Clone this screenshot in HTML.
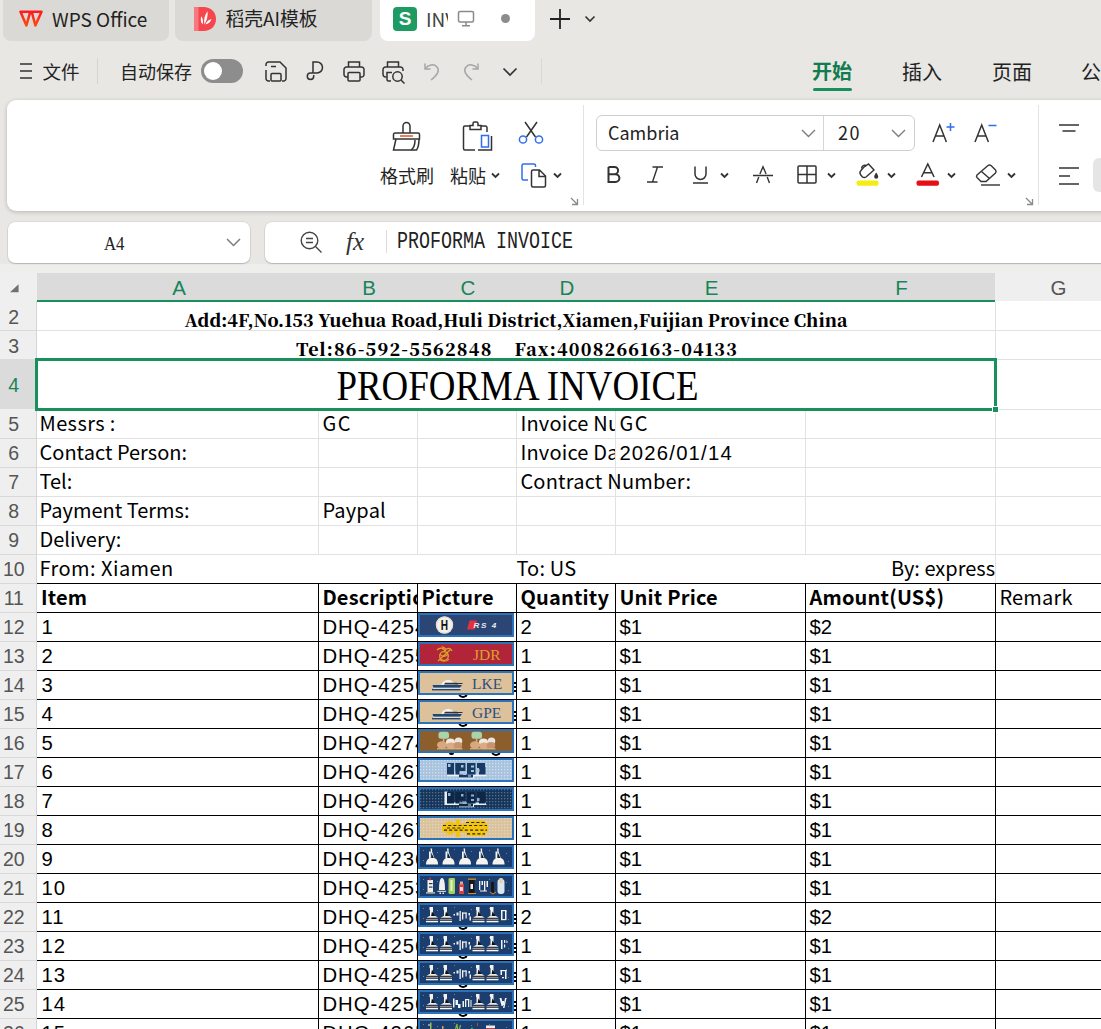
<!DOCTYPE html><html lang="zh"><head><meta charset="utf-8"><title>WPS Office - INVOICE</title><style>
*{box-sizing:border-box;margin:0;padding:0}
html,body{width:1101px;height:1029px;overflow:hidden;background:#e8e7e3}
body{position:relative;font-family:"Liberation Sans","Noto Sans CJK SC",sans-serif;color:#1f1f1f}
.abs,.abs *{position:absolute}
.ui{font-family:"Noto Sans CJK SC","Liberation Sans",sans-serif}
.t{position:absolute;white-space:pre;line-height:1}
.cell{position:absolute;white-space:pre;font-family:"Noto Sans CJK SC","Liberation Sans",sans-serif;font-size:20px;line-height:29px;height:29px;overflow:hidden;color:#000}
.b{font-weight:700}
.num{font-family:"Liberation Sans",sans-serif;font-size:20.300px;padding-top:1.500px}
.hl{position:absolute;height:1px;background:#e1e1e1}
.vl{position:absolute;width:1px;background:#e1e1e1}
.bk{background:#000}
.rh{position:absolute;left:0;width:27.500px;text-align:center;font-family:"Liberation Sans",sans-serif;font-size:19.500px;color:#555;line-height:29px}
.ch{position:absolute;top:273px;height:27px;text-align:center;font-family:"Liberation Sans",sans-serif;font-size:20.500px;line-height:29px;color:#17845a;background:#dbdbdb}
svg{position:absolute;overflow:visible}
.pic{position:absolute;left:418px;width:96px;height:24px;border:2px solid #2a72b9;overflow:hidden}
</style></head><body>
<div id="titlebar">
<div style="position:absolute;left:3px;top:-8px;width:166px;height:49px;background:#dad9d5;border-radius:8px"></div>
<div style="position:absolute;left:175px;top:-8px;width:197px;height:49px;background:#dad9d5;border-radius:8px"></div>
<div style="position:absolute;left:380px;top:-8px;width:155px;height:49px;background:#fff;border-radius:8px"></div>
<svg style="left:19px;top:9.500px" width="24" height="18" viewBox="0 0 24 18" fill="none" stroke-width="2.500" stroke-linejoin="round"><defs><linearGradient id="wg" x1="0" y1="0" x2="0" y2="1"><stop offset="0" stop-color="#ff1a1f"/><stop offset="1" stop-color="#ff4a0a"/></linearGradient></defs><path d="M1.500 1.700 H11.300 L7.400 15.500 Z M12.700 1.700 H22.500 L16.400 15.500 Z" stroke="url(#wg)"/></svg>
<div class="t ui" style="left:52px;top:9px;font-size:19px;color:#222">WPS Office</div>
<svg style="left:194px;top:7px" width="22" height="24" viewBox="0 0 22 24"><path d="M0 1 Q0 0 1 0 H9.500 C17 0 22 5 22 12 C22 19 17 24 9.500 24 H1.500 Q0 24 0 22.500 Z" fill="#f5464d"/><path d="M0 1 Q0 0 1 0 H4.500 V24 H1.500 Q0 24 0 22.500 Z" fill="#f8787d"/><path d="M8.500 17.500 C6.500 15 6.500 12 7.300 9.300 C9 12 9.500 15 8.500 17.500Z M10.300 17.300 C9.500 12 11 7.500 13.500 4.300 C14 9 13 14 10.300 17.300Z M11.300 17.500 C12.500 14.500 15 12.500 17.500 12 C16.500 15 14.500 17 11.300 17.500Z" fill="#fff"/></svg>
<div class="t ui" style="left:225.500px;top:9px;font-size:18.800px;color:#222">稻壳AI模板</div>
<div style="position:absolute;left:393px;top:7px;width:24px;height:24px;border-radius:4px;background:#1d9b62"></div>
<div class="t" style="left:393px;top:9px;width:24px;text-align:center;font-size:19px;font-weight:700;color:#fff">S</div>
<div class="t ui" style="left:426px;top:9px;font-size:19px;color:#444;width:22px;overflow:hidden">INV</div>
<svg style="left:457px;top:10px" width="20" height="18" viewBox="0 0 20 18" fill="none" stroke="#8a8a8a" stroke-width="1.5"><rect x="1.5" y="1.5" width="15" height="10.5" rx="1.5"/><path d="M9 12 V15.5 M5 15.8 H13"/></svg>
<div style="position:absolute;left:501px;top:14px;width:9px;height:9px;border-radius:50%;background:#8c8c8c"></div>
<svg style="left:549px;top:8px" width="22" height="22" viewBox="0 0 22 22" stroke="#222" stroke-width="1.8" fill="none"><path d="M11 1 V21 M1 11 H21"/></svg>
<svg style="left:584px;top:15px" width="12" height="8" viewBox="0 0 12 8" stroke="#333" stroke-width="1.6" fill="none"><path d="M1.5 1.5 L6 6 L10.5 1.5"/></svg>
</div>
<div id="menurow">
<svg style="left:19px;top:62px" width="15" height="18" viewBox="0 0 15 18" stroke="#333" stroke-width="1.6" fill="none"><path d="M1 2 H13 M1 9 H13 M1 16 H13"/></svg>
<div class="t ui" style="left:42.500px;top:61.500px;font-size:18.500px;color:#222">文件</div>
<div style="position:absolute;left:97px;top:58px;width:1px;height:26px;background:#d4d4d4"></div>
<div class="t ui" style="left:120px;top:62px;font-size:18px;color:#222">自动保存</div>
<div style="position:absolute;left:201px;top:59px;width:42px;height:24px;border-radius:12px;background:#8d8d8d"></div>
<div style="position:absolute;left:204px;top:62px;width:18px;height:18px;border-radius:50%;background:#fff"></div>
<svg style="left:265px;top:61px" width="22" height="21" viewBox="0 0 22 21" fill="none" stroke="#333" stroke-width="1.5"><path d="M1 5 V3.5 A2.5 2.5 0 0 1 3.5 1 H15 L21 7 V17.5 A2.5 2.5 0 0 1 18.500 20 H17 M1 9 V17.5 A2.5 2.5 0 0 0 3.5 20 H5"/><rect x="6" y="12.500" width="10" height="7.500" rx="1"/><path d="M6 5.500 H11"/></svg>
<svg style="left:305px;top:61px" width="20" height="21" viewBox="0 0 20 21" fill="none" stroke="#333" stroke-width="1.5"><path d="M8 12 V1 H12 A5.500 5.500 0 0 1 12 12 H5.500 A3.200 3.200 0 1 0 8.700 15.200 V14"/></svg>
<svg style="left:343px;top:61px" width="22" height="21" viewBox="0 0 22 21" fill="none" stroke="#333" stroke-width="1.5"><path d="M5.500 6 V1 H16.500 V6"/><path d="M5 16 H3.500 A2.500 2.500 0 0 1 1 13.500 V8.500 A2.500 2.500 0 0 1 3.500 6 H18.500 A2.500 2.500 0 0 1 21 8.500 V13.500 A2.500 2.500 0 0 1 18.500 16 H17"/><rect x="5" y="11.500" width="12" height="8.500" rx="1"/></svg>
<svg style="left:382px;top:61px" width="24" height="23" viewBox="0 0 24 23" fill="none" stroke="#333" stroke-width="1.5"><path d="M5.500 6 V1 H16.500 V6"/><path d="M4.500 16 H3.500 A2.500 2.500 0 0 1 1 13.500 V8.500 A2.500 2.500 0 0 1 3.500 6 H18.500 A2.500 2.500 0 0 1 21 8.500 V10"/><path d="M9 20 H6.500 A1.500 1.500 0 0 1 5 18.500 V11.500 H10"/><circle cx="15.500" cy="15.500" r="4.700"/><path d="M19 19 L22.500 22.500"/></svg>
<svg style="left:424px;top:62px" width="16" height="19" viewBox="0 0 16 19" fill="none" stroke="#a6a6a6" stroke-width="1.5"><path d="M1 1.500 V7 H6.500"/><path d="M1.500 6.500 C4 2.500 10 1.500 13 5 C16 8.500 13.500 13 7 18"/></svg>
<svg style="left:463px;top:62px" width="16" height="19" viewBox="0 0 16 19" fill="none" stroke="#a6a6a6" stroke-width="1.5"><path d="M15 1.500 V7 H9.500"/><path d="M14.500 6.500 C12 2.500 6 1.500 3 5 C0 8.500 2.500 13 9 18"/></svg>
<svg style="left:502px;top:67px" width="16" height="10" viewBox="0 0 16 10" stroke="#333" stroke-width="1.7" fill="none"><path d="M1.500 1.500 L8 8 L14.500 1.500"/></svg>
<div style="position:absolute;left:541px;top:58px;width:1px;height:26px;background:#d8d8d8"></div>
<div class="t ui b" style="left:812px;top:61px;font-size:20px;color:#107c4f">开始</div>
<div style="position:absolute;left:813px;top:88px;width:39px;height:3px;border-radius:1.5px;background:#17905c"></div>
<div class="t ui" style="left:902px;top:62px;font-size:20px;color:#222">插入</div>
<div class="t ui" style="left:992px;top:62px;font-size:20px;color:#222">页面</div>
<div class="t ui" style="left:1081px;top:62px;font-size:20px;color:#222">公</div>
</div>
<div id="ribbon">
<div style="position:absolute;left:7px;top:100px;width:1120px;height:111px;background:#fff;border-radius:9px;box-shadow:0 1px 4px rgba(0,0,0,.22)"></div>
<svg style="left:392px;top:121px" width="29" height="30" viewBox="0 0 29 30" fill="none" stroke="#333" stroke-width="1.5"><path d="M11 12 V5 A3.500 3.500 0 0 1 18 5 V12"/><path d="M3 12 H26 A1.500 1.500 0 0 1 27.500 13.500 V18 H1.500 V13.500 A1.500 1.500 0 0 1 3 12 Z"/><path d="M4 18 L1.500 29 H19 C22 27 23 23 23 19"/><path d="M27 18 C27 23 26 27 24.500 29 H19"/><path d="M8 15 H21" stroke="#e8502a"/></svg>
<div class="t ui" style="left:380px;top:165.500px;font-size:18px;color:#222">格式刷</div>
<svg style="left:462px;top:121px" width="31" height="30" viewBox="0 0 31 30" fill="none" stroke="#333" stroke-width="1.5"><path d="M8 5 H3 A1.500 1.500 0 0 0 1.500 6.500 V27.500 A1.500 1.500 0 0 0 3 29 H13"/><path d="M19 5 H23.500 A1.500 1.500 0 0 1 25 6.500 V11"/><path d="M8 8.500 V4.500 H11 V2.500 A1.500 1.500 0 0 1 12.500 1 H14.500 A1.500 1.500 0 0 1 16 2.500 V4.500 H19 V8.500 Z"/><path d="M16 29 H29.500 V15"/><rect x="19.500" y="14.500" width="7" height="11.500" stroke="#2f6df0"/></svg>
<div class="t ui" style="left:450px;top:165.500px;font-size:18px;color:#222">粘贴</div>
<svg style="left:491px;top:172px" width="9" height="7" viewBox="0 0 9 7" stroke="#333" stroke-width="1.8" fill="none"><path d="M1 1.500 L4.500 5 L8 1.500"/></svg>
<svg style="left:518px;top:121px" width="26" height="23" viewBox="0 0 26 23" fill="none" stroke-width="1.5"><path d="M7 1 L17.500 16 M19 1 L8.500 16" stroke="#333"/><circle cx="5" cy="18.500" r="3.600" stroke="#2f6df0"/><circle cx="21" cy="18.500" r="3.600" stroke="#2f6df0"/></svg>
<svg style="left:521px;top:163px" width="26" height="25" viewBox="0 0 26 25" fill="none" stroke-width="1.5"><path d="M7 17 H2.500 A1.500 1.500 0 0 1 1 15.500 V2.500 A1.500 1.500 0 0 1 2.500 1 H13 A1.500 1.500 0 0 1 14.500 2.500 V4" stroke="#2f6df0"/><path d="M10.500 8.500 A1.500 1.500 0 0 1 12 7 H18.500 L24.500 13 V22.500 A1.500 1.500 0 0 1 23 24 H12 A1.500 1.500 0 0 1 10.500 22.500 Z M18 7.500 V13.500 H24" stroke="#333"/></svg>
<svg style="left:553px;top:172px" width="9" height="7" viewBox="0 0 9 7" stroke="#333" stroke-width="1.8" fill="none"><path d="M1 1.500 L4.500 5 L8 1.500"/></svg>
<svg style="left:570px;top:197px" width="9" height="9" viewBox="0 0 9 9" stroke="#8a8a8a" stroke-width="1.300" fill="none"><path d="M1 1 L7.500 7.500 M7.500 2 V7.500 H2"/></svg>
<div style="position:absolute;left:583px;top:105px;width:1px;height:100px;background:#e3e3e3"></div>
<div style="position:absolute;left:596px;top:115px;width:319px;height:36px;border:1px solid #cfcfcf;border-radius:6px;background:#fff"></div>
<div style="position:absolute;left:823px;top:116px;width:1px;height:34px;background:#d6d6d6"></div>
<div class="t ui" style="left:608px;top:123px;font-size:18px;color:#222">Cambria</div>
<svg style="left:801px;top:129px" width="15" height="9" viewBox="0 0 15 9" stroke="#7d7d7d" stroke-width="1.400" fill="none"><path d="M1 1 L7.500 7.500 L14 1"/></svg>
<div class="t ui" style="left:838px;top:123px;font-size:18px;letter-spacing:1.500px;color:#222">20</div>
<svg style="left:891px;top:129px" width="15" height="9" viewBox="0 0 15 9" stroke="#7d7d7d" stroke-width="1.400" fill="none"><path d="M1 1 L7.500 7.500 L14 1"/></svg>
<svg style="left:932px;top:122px" width="24" height="21" viewBox="0 0 24 21" fill="none" stroke="#333" stroke-width="1.500"><path d="M1 20 L7.700 3 L14.400 20 M3.300 14 H12.100"/><path d="M18.500 1 V9 M14.500 5 H22.500" stroke="#2f6df0"/></svg>
<svg style="left:974px;top:122px" width="24" height="21" viewBox="0 0 24 21" fill="none" stroke="#333" stroke-width="1.500"><path d="M1 20 L7.700 3 L14.400 20 M3.300 14 H12.100"/><path d="M14.500 3.500 H22.500" stroke="#2f6df0"/></svg>
<svg style="left:607px;top:166px" width="14" height="17" viewBox="0 0 14 17" fill="none" stroke="#333" stroke-width="2"><path d="M1.500 1 H7.500 A3.600 3.600 0 0 1 7.500 8.200 H1.500 M1.500 8.200 H8.500 A3.900 3.900 0 0 1 8.500 16 H1.500 V1"/></svg>
<svg style="left:646px;top:166px" width="18" height="17" viewBox="0 0 18 17" fill="none" stroke="#333" stroke-width="1.400"><path d="M6.500 1 H17 M1 16 H11.500 M11.500 1 L6.500 16"/></svg>
<svg style="left:692px;top:166px" width="17" height="18" viewBox="0 0 17 18" fill="none" stroke="#333" stroke-width="1.500"><path d="M3 0.500 V8 A5.500 5.500 0 0 0 14 8 V0.500 M1 17 H16"/></svg>
<svg style="left:720px;top:172px" width="9" height="7" viewBox="0 0 9 7" stroke="#333" stroke-width="1.800" fill="none"><path d="M1 1.500 L4.500 5 L8 1.500"/></svg>
<svg style="left:752px;top:166px" width="22" height="18" viewBox="0 0 22 18" fill="none" stroke="#333" stroke-width="1.400"><path d="M4.500 17 L6.800 11 M15.200 11 L17.500 17 M7.900 8 L11 0.800 L14.100 8 M1 9.500 H21"/></svg>
<svg style="left:797px;top:165px" width="20" height="19" viewBox="0 0 20 19" fill="none" stroke="#333" stroke-width="1.500"><rect x="1" y="1" width="18" height="17" rx="1"/><path d="M10 1 V18 M1 9.500 H19"/></svg>
<svg style="left:827px;top:172px" width="9" height="7" viewBox="0 0 9 7" stroke="#333" stroke-width="1.800" fill="none"><path d="M1 1.500 L4.500 5 L8 1.500"/></svg>
<svg style="left:856px;top:163px" width="24" height="24" viewBox="0 0 24 24" fill="none" stroke="#333" stroke-width="1.400"><path d="M7.500 4.500 L12.500 1 L18 7 L10 14 C8.500 15 7 14.500 6 13.500 L4.500 11.500 C3.500 10 4 8.500 5 7.500 Z"/><path d="M5.500 5.500 C6 3 8 1.500 10.500 2.500"/><path d="M20.200 9.500 C21.500 11.500 22.200 12.800 22.200 13.800 A2 2 0 0 1 18.200 13.800 C18.200 12.800 18.900 11.500 20.200 9.500 Z" fill="#333" stroke="none"/><rect x="0.500" y="17.500" width="22" height="5.200" rx="2" fill="#f5ec13" stroke="none"/></svg>
<svg style="left:887px;top:172px" width="9" height="7" viewBox="0 0 9 7" stroke="#333" stroke-width="1.800" fill="none"><path d="M1 1.500 L4.500 5 L8 1.500"/></svg>
<svg style="left:916px;top:163px" width="24" height="24" viewBox="0 0 24 24" fill="none" stroke="#333" stroke-width="1.500"><path d="M5.500 14 L11.800 1 L18.100 14 M7.600 9.800 H16"/><rect x="0.500" y="17.500" width="22.500" height="5.200" rx="2" fill="#e60f16" stroke="none"/></svg>
<svg style="left:947px;top:172px" width="9" height="7" viewBox="0 0 9 7" stroke="#333" stroke-width="1.800" fill="none"><path d="M1 1.500 L4.500 5 L8 1.500"/></svg>
<svg style="left:975px;top:164px" width="26" height="22" viewBox="0 0 26 22" fill="none" stroke="#333" stroke-width="1.400"><path d="M2 11 L13 1.500 C14 0.800 15 0.800 16 1.500 L20.500 6 C21.300 7 21.300 8 20.500 9 L11 17.500 H6 L2 13.500 C1.300 12.700 1.300 11.800 2 11 Z"/><path d="M6.500 7.500 L14.500 14.500"/><path d="M6 21 H25"/></svg>
<svg style="left:1007px;top:172px" width="9" height="7" viewBox="0 0 9 7" stroke="#333" stroke-width="1.800" fill="none"><path d="M1 1.500 L4.500 5 L8 1.500"/></svg>
<svg style="left:1025px;top:197px" width="9" height="9" viewBox="0 0 9 9" stroke="#8a8a8a" stroke-width="1.300" fill="none"><path d="M1 1 L7.500 7.500 M7.500 2 V7.500 H2"/></svg>
<div style="position:absolute;left:1038px;top:105px;width:1px;height:100px;background:#e3e3e3"></div>
<svg style="left:1059px;top:124px" width="20" height="8" viewBox="0 0 20 8" stroke="#333" stroke-width="1.500" fill="none"><path d="M0 1 H20 M3.500 7 H16.500"/></svg>
<svg style="left:1059px;top:167px" width="20" height="18" viewBox="0 0 20 18" stroke="#333" stroke-width="1.500" fill="none"><path d="M0 1 H20 M0 9 H11 M0 17 H20"/></svg>
<div style="position:absolute;left:1093px;top:158px;width:30px;height:34px;border-radius:6px;background:#e5e5e5"></div>
</div>
<div id="fbar">
<div style="position:absolute;left:0;top:264px;width:1101px;height:10px;background:#eeeeec"></div>
<div style="position:absolute;left:7.500px;top:221.500px;width:242px;height:41px;background:#fff;border-radius:7px;box-shadow:0 0 0 .5px rgba(0,0,0,.10),0 1px 1.500px rgba(0,0,0,.18)"></div>
<div class="t" style="left:104px;top:233.500px;font-family:'Liberation Serif',serif;font-size:19.500px;color:#222;transform:scaleX(.86);transform-origin:0 0">A4</div>
<svg style="left:226px;top:238px" width="15" height="9" viewBox="0 0 15 9" stroke="#7d7d7d" stroke-width="1.500" fill="none"><path d="M1 1 L7.500 7.500 L14 1"/></svg>
<div style="position:absolute;left:264.500px;top:221.500px;width:860px;height:41px;background:#fff;border-radius:7px;box-shadow:0 0 0 .5px rgba(0,0,0,.10),0 1px 1.500px rgba(0,0,0,.18)"></div>
<svg style="left:300px;top:231px" width="23" height="23" viewBox="0 0 23 23" fill="none" stroke="#444" stroke-width="1.400"><circle cx="9.500" cy="9.500" r="8.300"/><path d="M15.500 15.500 L21.500 21.500 M6 7.500 H13 M6 11.500 H13"/></svg>
<div class="t" style="left:346px;top:229px;font-family:'Liberation Serif',serif;font-style:italic;font-size:25px;color:#333">fx</div>
<div style="position:absolute;left:386px;top:230px;width:1px;height:23px;background:#dcdcdc"></div>
<div class="t" style="left:397px;top:230px;font-family:'Liberation Mono',monospace;font-size:24px;color:#222;transform:scaleX(.764);transform-origin:0 0">PROFORMA INVOICE</div>
</div>
<div id="grid">
<div style="position:absolute;left:0;top:273px;width:1101px;height:756px;background:#fff"></div>
<div style="position:absolute;left:0;top:273px;width:36px;height:756px;background:#efefef"></div>
<div style="position:absolute;left:0;top:273px;width:1101px;height:28px;background:#efefef"></div>
<div style="position:absolute;left:37px;top:273px;width:958px;height:27px;background:#dbdbdb"></div>
<div class="ch" style="left:38.5px;width:281px;background:none">A</div>
<div class="ch" style="left:319.5px;width:99px;background:none">B</div>
<div class="ch" style="left:418.5px;width:99px;background:none">C</div>
<div class="ch" style="left:517.5px;width:99px;background:none">D</div>
<div class="ch" style="left:616.5px;width:190px;background:none">E</div>
<div class="ch" style="left:806.5px;width:190px;background:none">F</div>
<div class="ch" style="left:996.500px;width:124px;color:#555;background:none">G</div>
<div style="position:absolute;left:37px;top:300px;width:958px;height:2px;background:#17905c"></div>
<svg style="left:9.500px;top:284px" width="9" height="8.500" viewBox="0 0 10 9"><path d="M9.500 0 V9 H0 Z" fill="#707070"/></svg>
<div style="position:absolute;left:0;top:359px;width:36px;height:50px;background:#dbdbdb"></div>
<div class="rh" style="top:302px;height:28px;line-height:30px;color:#555">2</div>
<div class="hl" style="left:0;top:330px;width:36px;background:#d9d9d9"></div>
<div class="rh" style="top:331px;height:28px;line-height:30px;color:#555">3</div>
<div class="rh" style="top:359px;height:50px;line-height:52px;color:#17845a">4</div>
<div class="rh" style="top:409px;height:29px;line-height:31px;color:#555">5</div>
<div class="hl" style="left:0;top:438px;width:36px;background:#d9d9d9"></div>
<div class="rh" style="top:438px;height:29px;line-height:31px;color:#555">6</div>
<div class="hl" style="left:0;top:467px;width:36px;background:#d9d9d9"></div>
<div class="rh" style="top:467px;height:29px;line-height:31px;color:#555">7</div>
<div class="hl" style="left:0;top:496px;width:36px;background:#d9d9d9"></div>
<div class="rh" style="top:496px;height:29px;line-height:31px;color:#555">8</div>
<div class="hl" style="left:0;top:525px;width:36px;background:#d9d9d9"></div>
<div class="rh" style="top:525px;height:29px;line-height:31px;color:#555">9</div>
<div class="hl" style="left:0;top:554px;width:36px;background:#d9d9d9"></div>
<div class="rh" style="top:554px;height:29px;line-height:31px;color:#555">10</div>
<div class="hl" style="left:0;top:583px;width:36px;background:#d9d9d9"></div>
<div class="rh" style="top:583px;height:29px;line-height:31px;color:#555">11</div>
<div class="hl" style="left:0;top:612px;width:36px;background:#d9d9d9"></div>
<div class="rh" style="top:612px;height:29px;line-height:31px;color:#555">12</div>
<div class="hl" style="left:0;top:641px;width:36px;background:#d9d9d9"></div>
<div class="rh" style="top:641px;height:29px;line-height:31px;color:#555">13</div>
<div class="hl" style="left:0;top:670px;width:36px;background:#d9d9d9"></div>
<div class="rh" style="top:670px;height:29px;line-height:31px;color:#555">14</div>
<div class="hl" style="left:0;top:699px;width:36px;background:#d9d9d9"></div>
<div class="rh" style="top:699px;height:29px;line-height:31px;color:#555">15</div>
<div class="hl" style="left:0;top:728px;width:36px;background:#d9d9d9"></div>
<div class="rh" style="top:728px;height:29px;line-height:31px;color:#555">16</div>
<div class="hl" style="left:0;top:757px;width:36px;background:#d9d9d9"></div>
<div class="rh" style="top:757px;height:29px;line-height:31px;color:#555">17</div>
<div class="hl" style="left:0;top:786px;width:36px;background:#d9d9d9"></div>
<div class="rh" style="top:786px;height:29px;line-height:31px;color:#555">18</div>
<div class="hl" style="left:0;top:815px;width:36px;background:#d9d9d9"></div>
<div class="rh" style="top:815px;height:29px;line-height:31px;color:#555">19</div>
<div class="hl" style="left:0;top:844px;width:36px;background:#d9d9d9"></div>
<div class="rh" style="top:844px;height:29px;line-height:31px;color:#555">20</div>
<div class="hl" style="left:0;top:873px;width:36px;background:#d9d9d9"></div>
<div class="rh" style="top:873px;height:29px;line-height:31px;color:#555">21</div>
<div class="hl" style="left:0;top:902px;width:36px;background:#d9d9d9"></div>
<div class="rh" style="top:902px;height:29px;line-height:31px;color:#555">22</div>
<div class="hl" style="left:0;top:931px;width:36px;background:#d9d9d9"></div>
<div class="rh" style="top:931px;height:29px;line-height:31px;color:#555">23</div>
<div class="hl" style="left:0;top:960px;width:36px;background:#d9d9d9"></div>
<div class="rh" style="top:960px;height:29px;line-height:31px;color:#555">24</div>
<div class="hl" style="left:0;top:989px;width:36px;background:#d9d9d9"></div>
<div class="rh" style="top:989px;height:29px;line-height:31px;color:#555">25</div>
<div class="hl" style="left:0;top:1018px;width:36px;background:#d9d9d9"></div>
<div class="rh" style="top:1018px;height:29px;line-height:31px;color:#555">26</div>
<div class="hl" style="left:0;top:1047px;width:36px;background:#d9d9d9"></div>
<div class="vl" style="left:36px;top:301px;height:728px;background:#d4d4d4"></div>
<div class="hl" style="left:37px;top:330px;width:1064px"></div>
<div class="hl" style="left:37px;top:438px;width:1064px"></div>
<div class="hl" style="left:37px;top:467px;width:1064px"></div>
<div class="hl" style="left:37px;top:496px;width:1064px"></div>
<div class="hl" style="left:37px;top:525px;width:1064px"></div>
<div class="hl" style="left:37px;top:554px;width:1064px"></div>
<div class="hl" style="left:995px;top:359px;width:106px"></div><div class="hl" style="left:995px;top:409px;width:106px"></div>
<div class="vl" style="left:995px;top:302px;height:281px"></div>
<div class="vl" style="left:318px;top:410px;height:144px"></div>
<div class="vl" style="left:417px;top:410px;height:144px"></div>
<div class="vl" style="left:516px;top:410px;height:144px"></div>
<div class="vl" style="left:615px;top:410px;height:144px"></div>
<div class="vl" style="left:805px;top:410px;height:144px"></div>
<div class="hl bk" style="left:37px;top:583px;width:1064px"></div>
<div class="hl bk" style="left:37px;top:612px;width:1064px"></div>
<div class="hl bk" style="left:37px;top:641px;width:1064px"></div>
<div class="hl bk" style="left:37px;top:670px;width:1064px"></div>
<div class="hl bk" style="left:37px;top:699px;width:1064px"></div>
<div class="hl bk" style="left:37px;top:728px;width:1064px"></div>
<div class="hl bk" style="left:37px;top:757px;width:1064px"></div>
<div class="hl bk" style="left:37px;top:786px;width:1064px"></div>
<div class="hl bk" style="left:37px;top:815px;width:1064px"></div>
<div class="hl bk" style="left:37px;top:844px;width:1064px"></div>
<div class="hl bk" style="left:37px;top:873px;width:1064px"></div>
<div class="hl bk" style="left:37px;top:902px;width:1064px"></div>
<div class="hl bk" style="left:37px;top:931px;width:1064px"></div>
<div class="hl bk" style="left:37px;top:960px;width:1064px"></div>
<div class="hl bk" style="left:37px;top:989px;width:1064px"></div>
<div class="hl bk" style="left:37px;top:1018px;width:1064px"></div>
<div class="vl bk" style="left:318px;top:583px;height:446px"></div>
<div class="vl bk" style="left:417px;top:583px;height:446px"></div>
<div class="vl bk" style="left:516px;top:583px;height:446px"></div>
<div class="vl bk" style="left:615px;top:583px;height:446px"></div>
<div class="vl bk" style="left:805px;top:583px;height:446px"></div>
<div class="vl bk" style="left:995px;top:583px;height:446px"></div>
<div class="t" style="left:37px;top:310.500px;width:958px;text-align:center;font-family:'Noto Serif CJK SC','Liberation Serif',serif;font-weight:900;font-size:17.500px;color:#000;letter-spacing:0.060px">Add:4F,No.153 Yuehua Road,Huli District,Xiamen,Fuijian Province China</div>
<div class="t" style="left:38px;top:339.500px;width:958px;text-align:center;font-family:'Noto Serif CJK SC','Liberation Serif',serif;font-weight:900;font-size:17.500px;color:#000;letter-spacing:1.180px">Tel:86-592-5562848    Fax:4008266163-04133</div>
<div class="t" style="left:38px;top:365.800px;width:958px;text-align:center;font-family:'Liberation Serif',serif;font-size:41.500px;color:#000"><span style="display:inline-block;transform:scaleX(.89)">PROFORMA INVOICE</span></div>
<div style="position:absolute;left:35px;top:358px;width:962px;height:53px;border:3px solid #17905c"></div>
<div style="position:absolute;left:992px;top:406px;width:7px;height:7px;background:#17905c;border:1px solid #fff"></div>
<div class="cell " style="left:39.5px;top:408px;width:278.5px;letter-spacing:0.4px;">Messrs :</div>
<div class="cell " style="left:322.4px;top:408px;width:94.6px;letter-spacing:1.6px;">GC</div>
<div class="cell " style="left:520.4px;top:408px;width:94.6px;letter-spacing:0.2px;">Invoice Number:</div>
<div class="cell " style="left:619.4px;top:408px;width:185.6px;letter-spacing:1.6px;">GC</div>
<div class="cell " style="left:39.5px;top:437px;width:278.5px;">Contact Person:</div>
<div class="cell " style="left:520.4px;top:437px;width:94.6px;letter-spacing:0.2px;">Invoice Date:</div>
<div class="cell num" style="left:619.4px;top:437px;width:185.6px;letter-spacing:1.2px;">2026/01/14</div>
<div class="cell " style="left:39.5px;top:466px;width:278.5px;">Tel:</div>
<div class="cell " style="left:520.4px;top:466px;width:285px;letter-spacing:0.2px;">Contract Number:</div>
<div class="cell " style="left:39.5px;top:495px;width:278.5px;">Payment Terms:</div>
<div class="cell " style="left:322.4px;top:495px;width:94.6px;letter-spacing:0.2px;">Paypal</div>
<div class="cell " style="left:39.5px;top:524px;width:278.5px;">Delivery:</div>
<div class="cell " style="left:39.5px;top:553px;width:278.5px;letter-spacing:0.45px;">From: Xiamen</div>
<div class="cell " style="left:520.4px;top:553px;width:94.6px;margin-left:-4px;letter-spacing:0.2px;">To: US</div>
<div class="cell " style="left:805px;top:553px;width:190px;text-align:right;">By: express</div>
<div class="cell b" style="left:41.4px;top:582px;width:276.6px;margin-left:-.5px;letter-spacing:0.2px;">Item</div>
<div class="cell b" style="left:322.4px;top:582px;width:94.6px;letter-spacing:0.2px;">Description</div>
<div class="cell b" style="left:421.4px;top:582px;width:94.6px;letter-spacing:0.2px;">Picture</div>
<div class="cell b" style="left:520.4px;top:582px;width:94.6px;letter-spacing:0.2px;">Quantity</div>
<div class="cell b" style="left:619.4px;top:582px;width:185.6px;letter-spacing:0.2px;">Unit Price</div>
<div class="cell b" style="left:809.4px;top:582px;width:185.6px;letter-spacing:0.2px;">Amount(US$)</div>
<div class="cell " style="left:999.4px;top:582px;width:101.6px;letter-spacing:0.2px;">Remark</div>
<div class="cell num" style="left:41.4px;top:611px;width:276.6px;letter-spacing:1.0px;">1</div>
<div class="cell num" style="left:322.4px;top:611px;width:94.6px;letter-spacing:1.0px;">DHQ-4254</div>
<div class="cell num" style="left:520.4px;top:611px;width:94.6px;letter-spacing:0.2px;">2</div>
<div class="cell num" style="left:619.4px;top:611px;width:185.6px;">$1</div>
<div class="cell num" style="left:809.4px;top:611px;width:185.6px;">$2</div>
<div class="cell num" style="left:41.4px;top:640px;width:276.6px;letter-spacing:1.0px;">2</div>
<div class="cell num" style="left:322.4px;top:640px;width:94.6px;letter-spacing:1.0px;">DHQ-4255</div>
<div class="cell num" style="left:520.4px;top:640px;width:94.6px;letter-spacing:0.2px;">1</div>
<div class="cell num" style="left:619.4px;top:640px;width:185.6px;">$1</div>
<div class="cell num" style="left:809.4px;top:640px;width:185.6px;">$1</div>
<div class="cell num" style="left:41.4px;top:669px;width:276.6px;letter-spacing:1.0px;">3</div>
<div class="cell num" style="left:322.4px;top:669px;width:94.6px;letter-spacing:1.0px;">DHQ-4256</div>
<div class="cell num" style="left:520.4px;top:669px;width:94.6px;letter-spacing:0.2px;">1</div>
<div class="cell num" style="left:619.4px;top:669px;width:185.6px;">$1</div>
<div class="cell num" style="left:809.4px;top:669px;width:185.6px;">$1</div>
<div class="cell num" style="left:41.4px;top:698px;width:276.6px;letter-spacing:1.0px;">4</div>
<div class="cell num" style="left:322.4px;top:698px;width:94.6px;letter-spacing:1.0px;">DHQ-4256</div>
<div class="cell num" style="left:520.4px;top:698px;width:94.6px;letter-spacing:0.2px;">1</div>
<div class="cell num" style="left:619.4px;top:698px;width:185.6px;">$1</div>
<div class="cell num" style="left:809.4px;top:698px;width:185.6px;">$1</div>
<div class="cell num" style="left:41.4px;top:727px;width:276.6px;letter-spacing:1.0px;">5</div>
<div class="cell num" style="left:322.4px;top:727px;width:94.6px;letter-spacing:1.0px;">DHQ-4274</div>
<div class="cell num" style="left:520.4px;top:727px;width:94.6px;letter-spacing:0.2px;">1</div>
<div class="cell num" style="left:619.4px;top:727px;width:185.6px;">$1</div>
<div class="cell num" style="left:809.4px;top:727px;width:185.6px;">$1</div>
<div class="cell num" style="left:41.4px;top:756px;width:276.6px;letter-spacing:1.0px;">6</div>
<div class="cell num" style="left:322.4px;top:756px;width:94.6px;letter-spacing:1.0px;">DHQ-4267</div>
<div class="cell num" style="left:520.4px;top:756px;width:94.6px;letter-spacing:0.2px;">1</div>
<div class="cell num" style="left:619.4px;top:756px;width:185.6px;">$1</div>
<div class="cell num" style="left:809.4px;top:756px;width:185.6px;">$1</div>
<div class="cell num" style="left:41.4px;top:785px;width:276.6px;letter-spacing:1.0px;">7</div>
<div class="cell num" style="left:322.4px;top:785px;width:94.6px;letter-spacing:1.0px;">DHQ-4267</div>
<div class="cell num" style="left:520.4px;top:785px;width:94.6px;letter-spacing:0.2px;">1</div>
<div class="cell num" style="left:619.4px;top:785px;width:185.6px;">$1</div>
<div class="cell num" style="left:809.4px;top:785px;width:185.6px;">$1</div>
<div class="cell num" style="left:41.4px;top:814px;width:276.6px;letter-spacing:1.0px;">8</div>
<div class="cell num" style="left:322.4px;top:814px;width:94.6px;letter-spacing:1.0px;">DHQ-4267</div>
<div class="cell num" style="left:520.4px;top:814px;width:94.6px;letter-spacing:0.2px;">1</div>
<div class="cell num" style="left:619.4px;top:814px;width:185.6px;">$1</div>
<div class="cell num" style="left:809.4px;top:814px;width:185.6px;">$1</div>
<div class="cell num" style="left:41.4px;top:843px;width:276.6px;letter-spacing:1.0px;">9</div>
<div class="cell num" style="left:322.4px;top:843px;width:94.6px;letter-spacing:1.0px;">DHQ-4236</div>
<div class="cell num" style="left:520.4px;top:843px;width:94.6px;letter-spacing:0.2px;">1</div>
<div class="cell num" style="left:619.4px;top:843px;width:185.6px;">$1</div>
<div class="cell num" style="left:809.4px;top:843px;width:185.6px;">$1</div>
<div class="cell num" style="left:41.4px;top:872px;width:276.6px;letter-spacing:1.0px;">10</div>
<div class="cell num" style="left:322.4px;top:872px;width:94.6px;letter-spacing:1.0px;">DHQ-4253</div>
<div class="cell num" style="left:520.4px;top:872px;width:94.6px;letter-spacing:0.2px;">1</div>
<div class="cell num" style="left:619.4px;top:872px;width:185.6px;">$1</div>
<div class="cell num" style="left:809.4px;top:872px;width:185.6px;">$1</div>
<div class="cell num" style="left:41.4px;top:901px;width:276.6px;letter-spacing:1.0px;">11</div>
<div class="cell num" style="left:322.4px;top:901px;width:94.6px;letter-spacing:1.0px;">DHQ-4256</div>
<div class="cell num" style="left:520.4px;top:901px;width:94.6px;letter-spacing:0.2px;">2</div>
<div class="cell num" style="left:619.4px;top:901px;width:185.6px;">$1</div>
<div class="cell num" style="left:809.4px;top:901px;width:185.6px;">$2</div>
<div class="cell num" style="left:41.4px;top:930px;width:276.6px;letter-spacing:1.0px;">12</div>
<div class="cell num" style="left:322.4px;top:930px;width:94.6px;letter-spacing:1.0px;">DHQ-4256</div>
<div class="cell num" style="left:520.4px;top:930px;width:94.6px;letter-spacing:0.2px;">1</div>
<div class="cell num" style="left:619.4px;top:930px;width:185.6px;">$1</div>
<div class="cell num" style="left:809.4px;top:930px;width:185.6px;">$1</div>
<div class="cell num" style="left:41.4px;top:959px;width:276.6px;letter-spacing:1.0px;">13</div>
<div class="cell num" style="left:322.4px;top:959px;width:94.6px;letter-spacing:1.0px;">DHQ-4256</div>
<div class="cell num" style="left:520.4px;top:959px;width:94.6px;letter-spacing:0.2px;">1</div>
<div class="cell num" style="left:619.4px;top:959px;width:185.6px;">$1</div>
<div class="cell num" style="left:809.4px;top:959px;width:185.6px;">$1</div>
<div class="cell num" style="left:41.4px;top:988px;width:276.6px;letter-spacing:1.0px;">14</div>
<div class="cell num" style="left:322.4px;top:988px;width:94.6px;letter-spacing:1.0px;">DHQ-4256</div>
<div class="cell num" style="left:520.4px;top:988px;width:94.6px;letter-spacing:0.2px;">1</div>
<div class="cell num" style="left:619.4px;top:988px;width:185.6px;">$1</div>
<div class="cell num" style="left:809.4px;top:988px;width:185.6px;">$1</div>
<div class="cell num" style="left:41.4px;top:1017px;width:276.6px;letter-spacing:1.0px;">15</div>
<div class="cell num" style="left:322.4px;top:1017px;width:94.6px;letter-spacing:1.0px;">DHQ-4265</div>
<div class="cell num" style="left:520.4px;top:1017px;width:94.6px;letter-spacing:0.2px;">1</div>
<div class="cell num" style="left:619.4px;top:1017px;width:185.6px;">$1</div>
<div class="cell num" style="left:809.4px;top:1017px;width:185.6px;">$1</div>
<div style="position:absolute;left:458px;top:692px;width:9.500px;height:6px;border:2px solid #000;border-top:none;border-radius:0 0 5px 5px"></div>
<div style="position:absolute;left:514px;top:682px;width:2.500px;height:1.600px;background:#000"></div>
<div style="position:absolute;left:514px;top:686px;width:2.500px;height:1.600px;background:#000"></div>
<div style="position:absolute;left:514px;top:690px;width:2.500px;height:1.600px;background:#000"></div>
<div style="position:absolute;left:458px;top:721px;width:9.500px;height:6px;border:2px solid #000;border-top:none;border-radius:0 0 5px 5px"></div>
<div style="position:absolute;left:514px;top:711px;width:2.500px;height:1.600px;background:#000"></div>
<div style="position:absolute;left:514px;top:715px;width:2.500px;height:1.600px;background:#000"></div>
<div style="position:absolute;left:514px;top:719px;width:2.500px;height:1.600px;background:#000"></div>
<div style="position:absolute;left:458px;top:924px;width:9.500px;height:6px;border:2px solid #000;border-top:none;border-radius:0 0 5px 5px"></div>
<div style="position:absolute;left:514px;top:914px;width:2.500px;height:1.600px;background:#000"></div>
<div style="position:absolute;left:514px;top:918px;width:2.500px;height:1.600px;background:#000"></div>
<div style="position:absolute;left:514px;top:922px;width:2.500px;height:1.600px;background:#000"></div>
<div style="position:absolute;left:458px;top:953px;width:9.500px;height:6px;border:2px solid #000;border-top:none;border-radius:0 0 5px 5px"></div>
<div style="position:absolute;left:514px;top:943px;width:2.500px;height:1.600px;background:#000"></div>
<div style="position:absolute;left:514px;top:947px;width:2.500px;height:1.600px;background:#000"></div>
<div style="position:absolute;left:514px;top:951px;width:2.500px;height:1.600px;background:#000"></div>
<div style="position:absolute;left:458px;top:982px;width:9.500px;height:6px;border:2px solid #000;border-top:none;border-radius:0 0 5px 5px"></div>
<div style="position:absolute;left:514px;top:972px;width:2.500px;height:1.600px;background:#000"></div>
<div style="position:absolute;left:514px;top:976px;width:2.500px;height:1.600px;background:#000"></div>
<div style="position:absolute;left:514px;top:980px;width:2.500px;height:1.600px;background:#000"></div>
<div style="position:absolute;left:458px;top:1011px;width:9.500px;height:6px;border:2px solid #000;border-top:none;border-radius:0 0 5px 5px"></div>
<div style="position:absolute;left:514px;top:1001px;width:2.500px;height:1.600px;background:#000"></div>
<div style="position:absolute;left:514px;top:1005px;width:2.500px;height:1.600px;background:#000"></div>
<div style="position:absolute;left:514px;top:1009px;width:2.500px;height:1.600px;background:#000"></div>
<div style="position:absolute;left:448.500px;top:753px;width:5px;height:2px;background:#000;border-radius:0 0 3px 3px"></div>
<div style="position:absolute;left:491px;top:750px;width:9.500px;height:6px;border:2px solid #000;border-top:none;border-radius:0 0 5px 5px"></div>
<div class="pic" style="top:613px;background:#2b4675"><svg style="left:0;top:0" width="92" height="20" viewBox="0 0 92 20"><circle cx="24.500" cy="10" r="8.700" fill="#f3f1ea"/><circle cx="24.500" cy="10" r="8" fill="none" stroke="#d9d5c8" stroke-width=".8"/><text x="24.500" y="15" text-anchor="middle" font-family="Liberation Sans, sans-serif" font-weight="700" font-size="14" fill="#111" transform="translate(24.500 0) scale(.72 1) translate(-24.500 0)">H</text><path d="M49.500 5.500 H57 L54.500 14.500 H47 Z" fill="#e3313f"/><text x="53.500" y="13.300" font-family="Liberation Sans, sans-serif" font-weight="700" font-style="italic" font-size="8" letter-spacing="1.600" fill="#ececf2">RS 4</text></svg></div>
<div class="pic" style="top:642px;background:#b1243a"><svg style="left:0;top:0" width="92" height="20" viewBox="0 0 92 20"><g fill="none" stroke="#d8a42a" stroke-width="1.300"><circle cx="24" cy="12" r="4.300"/><path d="M17 6 C20 3 24 4 25 7 C27 3 31 4 32 7"/><path d="M18 17 L31 5 M20 10 C22 13 26 13 28 10 M19.500 14.500 C21 18 27 18 29 15"/><path d="M22 2.500 L26 5"/></g><text x="53" y="15.500" font-family="Liberation Serif, serif" font-size="15.500" fill="#d8a42a">JDR</text></svg></div>
<div class="pic" style="top:671px;background:#dcc19b"><svg style="left:0;top:0" width="92" height="20" viewBox="0 0 92 20"><path d="M12.500 12 H42 L40 14.800 H13.500 Z" fill="#1f4877"/><path d="M12 16.600 H40.500" stroke="#1f4877" stroke-width="1.600"/><path d="M13 15.300 H41" stroke="#f4f1ea" stroke-width=".9"/><path d="M21 11.800 C23 7.500 28 5.500 32 8 L35 11.800 Z" fill="#f4f3ef"/><path d="M25 9.800 H37 L38.500 11.600 H24 Z" fill="#2d3440"/><path d="M36 10.500 H42.500" stroke="#27313f" stroke-width="1"/><text x="52" y="15.500" font-family="Liberation Serif, serif" font-size="15.500" fill="#2a4f80">LKE</text></svg></div>
<div class="pic" style="top:700px;background:#dcc19b"><svg style="left:0;top:0" width="92" height="20" viewBox="0 0 92 20"><path d="M12.500 12 H42 L40 14.800 H13.500 Z" fill="#1f4877"/><path d="M12 16.600 H40.500" stroke="#1f4877" stroke-width="1.600"/><path d="M13 15.300 H41" stroke="#f4f1ea" stroke-width=".9"/><path d="M21 11.800 C23 7.500 28 5.500 32 8 L35 11.800 Z" fill="#f4f3ef"/><path d="M25 9.800 H37 L38.500 11.600 H24 Z" fill="#2d3440"/><path d="M36 10.500 H42.500" stroke="#27313f" stroke-width="1"/><text x="52" y="15.500" font-family="Liberation Serif, serif" font-size="15.500" fill="#2a4f80">GPE</text></svg></div>
<div class="pic" style="top:729px;background:#8c5e2b"><svg style="left:0;top:0" width="92" height="20" viewBox="0 0 92 20"><rect x="18.5" y=".8" width="10.500" height="7" rx="2.500" fill="#a8d3ab"/><rect x="22.8" y="7" width="1.600" height="4" fill="#c9b38f"/><ellipse cx="22" cy="14" rx="5" ry="3.800" fill="#d7a77e"/><ellipse cx="30.5" cy="11" rx="4.500" ry="3.600" fill="#efe9e1"/><ellipse cx="31" cy="14.800" rx="5" ry="3.200" fill="#dba982"/><ellipse cx="38.5" cy="10" rx="3.800" ry="3.600" fill="#e9e4dc"/><ellipse cx="38" cy="14.500" rx="4.200" ry="3.400" fill="#c8946d"/><rect x="17" y="17.200" width="25.500" height="1.200" fill="#cdbb9a"/><rect x="51.5" y=".8" width="10.500" height="7" rx="2.500" fill="#a8d3ab"/><rect x="55.8" y="7" width="1.600" height="4" fill="#c9b38f"/><ellipse cx="55" cy="14" rx="5" ry="3.800" fill="#d7a77e"/><ellipse cx="63.5" cy="11" rx="4.500" ry="3.600" fill="#efe9e1"/><ellipse cx="64" cy="14.800" rx="5" ry="3.200" fill="#dba982"/><ellipse cx="71.5" cy="10" rx="3.800" ry="3.600" fill="#e9e4dc"/><ellipse cx="71" cy="14.500" rx="4.200" ry="3.400" fill="#c8946d"/><rect x="50" y="17.200" width="25.500" height="1.200" fill="#cdbb9a"/></svg></div>
<div class="pic" style="top:758px;background:#a9c3df"><svg style="left:0;top:0" width="92" height="20" viewBox="0 0 92 20"><defs><pattern id="da" width="3" height="3" patternUnits="userSpaceOnUse"><rect x="0" y="0" width="1.300" height="1.300" fill="#fff" fill-opacity="0.45"/></pattern></defs><rect width="92" height="20" fill="url(#da)"/><path d="M27 14.500 H66 V16.200 H54 V18.500 H39 V16.200 H27 Z" fill="#eef3f9"/><g fill="#163a63"><rect x="27" y="3" width="7" height="11.500"/><rect x="35.500" y="3" width="10" height="8"/><rect x="35.500" y="3" width="4" height="11.500"/><rect x="47" y="3" width="8.500" height="11.500"/><rect x="57" y="3" width="8" height="5"/><rect x="59" y="7" width="6.500" height="7.500"/><rect x="39" y="14.500" width="14" height="3"/></g><g fill="#a9c3df"><rect x="28" y="4" width="2.500" height="3"/><rect x="41" y="5" width="2.500" height="2.500"/><rect x="51" y="5.500" width="3" height="2"/><rect x="51" y="10" width="3" height="2"/><rect x="57" y="9" width="2.500" height="3"/><rect x="43" y="12.500" width="3" height="2.500"/><rect x="48" y="15.300" width="3" height="1.300"/></g></svg></div>
<div class="pic" style="top:787px;background:#16355b"><svg style="left:0;top:0" width="92" height="20" viewBox="0 0 92 20"><defs><pattern id="db" width="3" height="3" patternUnits="userSpaceOnUse"><rect x="0" y="0" width="1.300" height="1.300" fill="#fff" fill-opacity="0.28"/></pattern></defs><rect width="92" height="20" fill="url(#db)"/><path d="M24.500 2.500 H27.500 V13.500 H66 V16 H54 V18.300 H39 V16 H24.500 Z" fill="#e6edf5"/><g fill="#0e2747"><rect x="27" y="3" width="7" height="11.500"/><rect x="35.500" y="3" width="10" height="8"/><rect x="35.500" y="3" width="4" height="11.500"/><rect x="47" y="3" width="8.500" height="11.500"/><rect x="57" y="3" width="8" height="5"/><rect x="59" y="7" width="6.500" height="7.500"/><rect x="39" y="14.500" width="14" height="3"/></g><g fill="#8fb0d2"><rect x="28" y="4" width="2.500" height="3"/><rect x="41" y="5" width="2.500" height="2.500"/><rect x="51" y="5.500" width="3" height="2"/><rect x="51" y="10" width="3" height="2"/><rect x="57" y="9" width="2.500" height="3"/><rect x="43" y="12.500" width="3" height="2.500"/><rect x="48" y="15.300" width="3" height="1.300"/></g></svg></div>
<div class="pic" style="top:816px;background:#d9c29c"><svg style="left:0;top:0" width="92" height="20" viewBox="0 0 92 20"><defs><pattern id="dc" width="3" height="3" patternUnits="userSpaceOnUse"><rect x="0" y="0" width="1.300" height="1.300" fill="#fff" fill-opacity="0.35"/></pattern></defs><rect width="92" height="20" fill="url(#dc)"/><g fill="#f2c40e"><rect x="22" y="5.500" width="46" height="9" rx="3.500"/><rect x="36" y="1.500" width="4" height="17.500"/><rect x="45" y="2.500" width="22" height="15.500" rx="5"/><rect x="26" y="3.500" width="8" height="13" rx="3"/></g><g stroke="#2b2618" stroke-width="1.200" stroke-dasharray="3 2.200"><path d="M23 7.500 H67 M24 12.200 H67 M46 4.500 H66 M47 15.800 H65 M27 10 H44"/></g></svg></div>
<div class="pic" style="top:845px;background:#1b3e6e"><svg style="left:0;top:0" width="92" height="20" viewBox="0 0 92 20"><g fill="#fff" fill-opacity=".35"><rect x="3" y="3" width="1" height="1"/><rect x="17" y="5" width="1" height="1"/><rect x="34" y="2" width="1" height="1"/><rect x="51" y="4" width="1" height="1"/><rect x="69" y="3" width="1" height="1"/><rect x="86" y="6" width="1" height="1"/><rect x="88" y="14" width="1" height="1"/><rect x="3" y="13" width="1" height="1"/></g><path d="M10.5 1.500 h1.600 v3 l2.200 6.500 h-2.500 Z M9.0 4.500 h1.800 v7 h-1.800z" fill="#f4f4f4"/><path d="M11.3 5.500 l2.600 5.500 h-2.600z" fill="#15202e"/><path d="M6.0 17.500 c0 -4 2 -6.500 5 -6.500 h2 c3.500 0 5 2.500 5 6.500 z" fill="#f5f3ef"/><path d="M27 1.500 h1.600 v3 l2.200 6.500 h-2.500 Z M25.5 4.500 h1.800 v7 h-1.800z" fill="#f4f4f4"/><path d="M27.8 5.500 l2.600 5.500 h-2.600z" fill="#15202e"/><path d="M22.5 17.500 c0 -4 2 -6.500 5 -6.500 h2 c3.500 0 5 2.500 5 6.500 z" fill="#f5f3ef"/><path d="M43.5 1.500 h1.600 v3 l2.200 6.500 h-2.500 Z M42.0 4.500 h1.800 v7 h-1.800z" fill="#f4f4f4"/><path d="M44.3 5.500 l2.600 5.500 h-2.600z" fill="#15202e"/><path d="M39.0 17.500 c0 -4 2 -6.500 5 -6.500 h2 c3.500 0 5 2.500 5 6.500 z" fill="#f5f3ef"/><path d="M60.5 1.500 h1.600 v3 l2.200 6.500 h-2.500 Z M59.0 4.500 h1.800 v7 h-1.800z" fill="#f4f4f4"/><path d="M61.3 5.500 l2.600 5.500 h-2.600z" fill="#15202e"/><path d="M56.0 17.500 c0 -4 2 -6.500 5 -6.500 h2 c3.500 0 5 2.500 5 6.500 z" fill="#f5f3ef"/><path d="M77 1.500 h1.600 v3 l2.200 6.500 h-2.500 Z M75.5 4.500 h1.800 v7 h-1.800z" fill="#f4f4f4"/><path d="M77.8 5.500 l2.600 5.500 h-2.600z" fill="#15202e"/><path d="M72.5 17.500 c0 -4 2 -6.500 5 -6.500 h2 c3.500 0 5 2.500 5 6.500 z" fill="#f5f3ef"/></svg></div>
<div class="pic" style="top:874px;background:#1b3e6e"><svg style="left:0;top:0" width="92" height="20" viewBox="0 0 92 20"><g fill="#fff" fill-opacity=".35"><rect x="3" y="3" width="1" height="1"/><rect x="17" y="5" width="1" height="1"/><rect x="34" y="2" width="1" height="1"/><rect x="51" y="4" width="1" height="1"/><rect x="69" y="3" width="1" height="1"/><rect x="86" y="6" width="1" height="1"/><rect x="88" y="14" width="1" height="1"/><rect x="3" y="13" width="1" height="1"/></g><rect x="7.500" y="4" width="5.500" height="12" fill="#f1f1f1"/><rect x="9.500" y="1.500" width="1.200" height="3" fill="#e23b3b"/><rect x="9" y="7" width="3.500" height="1.200" fill="#333"/><rect x="9" y="10.500" width="3.500" height="1.200" fill="#333"/><rect x="6" y="16.300" width="9" height="1.200" fill="#e9d9b0"/><path d="M19 14 c0 -8 1 -12 3 -12 s3 4 3 12 z" fill="#f1f1ef"/><rect x="17.500" y="14.800" width="8.500" height="1" fill="#eee"/><rect x="19.500" y="16.500" width="1.500" height="1.500" fill="#eee"/><rect x="22.500" y="16.500" width="1.500" height="1.500" fill="#eee"/><rect x="28.500" y="2" width="6.500" height="16" rx="1.500" fill="#a5d163"/><rect x="30.500" y="4" width="2" height="11" fill="#e4f2c6"/><rect x="39" y="8" width="5" height="10" fill="#d8403f"/><rect x="40" y="5.500" width="3" height="3" fill="#e9a1a1"/><rect x="40" y="11" width="3" height="4" fill="#f0d7d7"/><rect x="49" y="4" width="5.500" height="13" fill="#1a1712"/><rect x="48" y="2.500" width="8" height="1.300" fill="#c9962b"/><rect x="50.500" y="8" width="2.500" height="5" fill="#eee"/><rect x="48" y="17" width="8" height="1" fill="#c9962b"/><g fill="#f3f3f3"><rect x="59" y="5" width="1.300" height="9"/><rect x="61.500" y="5" width="1.500" height="4"/><rect x="64" y="5" width="1.300" height="10"/><rect x="66.500" y="5" width="1.500" height="6"/><rect x="60" y="14.500" width="7" height="1"/></g><rect x="71" y="6" width="3" height="11" fill="#1a1712"/><path d="M70 16 l3 2 l3 -2" stroke="#c9962b" fill="none"/><rect x="77.500" y="3" width="7" height="15" rx="3" fill="#dbe6ee"/><rect x="79.500" y="2" width="3" height="5" fill="#e7cfa8"/></svg></div>
<div class="pic" style="top:903px;background:#1b3e6e"><svg style="left:0;top:0" width="92" height="20" viewBox="0 0 92 20"><g fill="#fff" fill-opacity=".35"><rect x="3" y="3" width="1" height="1"/><rect x="17" y="5" width="1" height="1"/><rect x="34" y="2" width="1" height="1"/><rect x="51" y="4" width="1" height="1"/><rect x="69" y="3" width="1" height="1"/><rect x="86" y="6" width="1" height="1"/><rect x="88" y="14" width="1" height="1"/><rect x="3" y="13" width="1" height="1"/></g><path d="M9.5 2 h3.500 v3 h-3.500z M10.0 5 h3 v6.500 h-3z" fill="#f2f2f2"/><path d="M12.0 6.500 l3.200 5 h-4.200 z" fill="#0d0f14"/><path d="M6.5 12.800 l3 -1.800 h6 l2.500 1.800z" fill="#f3ead9"/><rect x="6.0" y="14.300" width="12" height=".9" fill="#e0a872"/><rect x="6.0" y="16" width="12" height="1.300" fill="#f7f7f7"/><path d="M23.5 2 h3.500 v3 h-3.500z M24.0 5 h3 v6.500 h-3z" fill="#f2f2f2"/><path d="M26.0 6.500 l3.200 5 h-4.200 z" fill="#0d0f14"/><path d="M20.5 12.800 l3 -1.800 h6 l2.500 1.800z" fill="#f3ead9"/><rect x="20.0" y="14.300" width="12" height=".9" fill="#e0a872"/><rect x="20.0" y="16" width="12" height="1.300" fill="#f7f7f7"/><path d="M56 2 h3.500 v3 h-3.500z M56.5 5 h3 v6.500 h-3z" fill="#f2f2f2"/><path d="M58.5 6.500 l3.200 5 h-4.200 z" fill="#0d0f14"/><path d="M53 12.800 l3 -1.800 h6 l2.500 1.800z" fill="#f3ead9"/><rect x="52.5" y="14.300" width="12" height=".9" fill="#e0a872"/><rect x="52.5" y="16" width="12" height="1.300" fill="#f7f7f7"/><path d="M70 2 h3.500 v3 h-3.500z M70.5 5 h3 v6.500 h-3z" fill="#f2f2f2"/><path d="M72.5 6.500 l3.200 5 h-4.200 z" fill="#0d0f14"/><path d="M67 12.800 l3 -1.800 h6 l2.500 1.800z" fill="#f3ead9"/><rect x="66.5" y="14.300" width="12" height=".9" fill="#e0a872"/><rect x="66.5" y="16" width="12" height="1.300" fill="#f7f7f7"/><g fill="#f3f3f3"><rect x="33.500" y="9" width="1.500" height="1.500"/><rect x="36.500" y="7.500" width="2" height="3"/><rect x="39.500" y="6" width="1.300" height="10"/><rect x="42" y="7.500" width="1.300" height="7"/><rect x="42" y="7.500" width="4.500" height="1.200"/><rect x="45.500" y="7.500" width="1.200" height="6"/><rect x="48.500" y="8" width="1.500" height="2.500"/><rect x="49.500" y="11.500" width="1.500" height="4"/></g><g fill="#f3f3f3"><rect x="81" y="5" width="1.500" height="10"/><rect x="85" y="5" width="1.500" height="10"/><rect x="81" y="5" width="5" height="1.200"/><rect x="81" y="14" width="5" height="1.200"/></g></svg></div>
<div class="pic" style="top:932px;background:#1b3e6e"><svg style="left:0;top:0" width="92" height="20" viewBox="0 0 92 20"><g fill="#fff" fill-opacity=".35"><rect x="3" y="3" width="1" height="1"/><rect x="17" y="5" width="1" height="1"/><rect x="34" y="2" width="1" height="1"/><rect x="51" y="4" width="1" height="1"/><rect x="69" y="3" width="1" height="1"/><rect x="86" y="6" width="1" height="1"/><rect x="88" y="14" width="1" height="1"/><rect x="3" y="13" width="1" height="1"/></g><path d="M9.5 2 h3.500 v3 h-3.500z M10.0 5 h3 v6.500 h-3z" fill="#f2f2f2"/><path d="M12.0 6.500 l3.200 5 h-4.200 z" fill="#0d0f14"/><path d="M6.5 12.800 l3 -1.800 h6 l2.500 1.800z" fill="#f3ead9"/><rect x="6.0" y="14.300" width="12" height=".9" fill="#e0a872"/><rect x="6.0" y="16" width="12" height="1.300" fill="#f7f7f7"/><path d="M23.5 2 h3.500 v3 h-3.500z M24.0 5 h3 v6.500 h-3z" fill="#f2f2f2"/><path d="M26.0 6.500 l3.200 5 h-4.200 z" fill="#0d0f14"/><path d="M20.5 12.800 l3 -1.800 h6 l2.500 1.800z" fill="#f3ead9"/><rect x="20.0" y="14.300" width="12" height=".9" fill="#e0a872"/><rect x="20.0" y="16" width="12" height="1.300" fill="#f7f7f7"/><path d="M56 2 h3.500 v3 h-3.500z M56.5 5 h3 v6.500 h-3z" fill="#f2f2f2"/><path d="M58.5 6.500 l3.200 5 h-4.200 z" fill="#0d0f14"/><path d="M53 12.800 l3 -1.800 h6 l2.500 1.800z" fill="#f3ead9"/><rect x="52.5" y="14.300" width="12" height=".9" fill="#e0a872"/><rect x="52.5" y="16" width="12" height="1.300" fill="#f7f7f7"/><path d="M70 2 h3.500 v3 h-3.500z M70.5 5 h3 v6.500 h-3z" fill="#f2f2f2"/><path d="M72.5 6.500 l3.200 5 h-4.200 z" fill="#0d0f14"/><path d="M67 12.800 l3 -1.800 h6 l2.500 1.800z" fill="#f3ead9"/><rect x="66.5" y="14.300" width="12" height=".9" fill="#e0a872"/><rect x="66.5" y="16" width="12" height="1.300" fill="#f7f7f7"/><g fill="#f3f3f3"><rect x="33.500" y="9" width="1.500" height="1.500"/><rect x="36.500" y="7.500" width="2" height="3"/><rect x="39.500" y="6" width="1.300" height="10"/><rect x="42" y="7.500" width="1.300" height="7"/><rect x="42" y="7.500" width="4.500" height="1.200"/><rect x="45.500" y="7.500" width="1.200" height="6"/><rect x="48.500" y="8" width="1.500" height="2.500"/><rect x="49.500" y="11.500" width="1.500" height="4"/></g><g fill="#f3f3f3"><rect x="81" y="6" width="1.500" height="9"/><rect x="84" y="6" width="1.200" height="3"/><rect x="84" y="10.500" width="1.200" height="3"/><rect x="86.500" y="7" width="1" height="2"/></g></svg></div>
<div class="pic" style="top:961px;background:#1b3e6e"><svg style="left:0;top:0" width="92" height="20" viewBox="0 0 92 20"><g fill="#fff" fill-opacity=".35"><rect x="3" y="3" width="1" height="1"/><rect x="17" y="5" width="1" height="1"/><rect x="34" y="2" width="1" height="1"/><rect x="51" y="4" width="1" height="1"/><rect x="69" y="3" width="1" height="1"/><rect x="86" y="6" width="1" height="1"/><rect x="88" y="14" width="1" height="1"/><rect x="3" y="13" width="1" height="1"/></g><path d="M9.5 2 h3.500 v3 h-3.500z M10.0 5 h3 v6.500 h-3z" fill="#f2f2f2"/><path d="M12.0 6.500 l3.200 5 h-4.200 z" fill="#0d0f14"/><path d="M6.5 12.800 l3 -1.800 h6 l2.500 1.800z" fill="#f3ead9"/><rect x="6.0" y="14.300" width="12" height=".9" fill="#e0a872"/><rect x="6.0" y="16" width="12" height="1.300" fill="#f7f7f7"/><path d="M23.5 2 h3.500 v3 h-3.500z M24.0 5 h3 v6.500 h-3z" fill="#f2f2f2"/><path d="M26.0 6.500 l3.200 5 h-4.200 z" fill="#0d0f14"/><path d="M20.5 12.800 l3 -1.800 h6 l2.500 1.800z" fill="#f3ead9"/><rect x="20.0" y="14.300" width="12" height=".9" fill="#e0a872"/><rect x="20.0" y="16" width="12" height="1.300" fill="#f7f7f7"/><path d="M56 2 h3.500 v3 h-3.500z M56.5 5 h3 v6.500 h-3z" fill="#f2f2f2"/><path d="M58.5 6.500 l3.200 5 h-4.200 z" fill="#0d0f14"/><path d="M53 12.800 l3 -1.800 h6 l2.500 1.800z" fill="#f3ead9"/><rect x="52.5" y="14.300" width="12" height=".9" fill="#e0a872"/><rect x="52.5" y="16" width="12" height="1.300" fill="#f7f7f7"/><path d="M70 2 h3.500 v3 h-3.500z M70.5 5 h3 v6.500 h-3z" fill="#f2f2f2"/><path d="M72.5 6.500 l3.200 5 h-4.200 z" fill="#0d0f14"/><path d="M67 12.800 l3 -1.800 h6 l2.500 1.800z" fill="#f3ead9"/><rect x="66.5" y="14.300" width="12" height=".9" fill="#e0a872"/><rect x="66.5" y="16" width="12" height="1.300" fill="#f7f7f7"/><g fill="#f3f3f3"><rect x="33.500" y="9" width="1.500" height="1.500"/><rect x="36.500" y="7.500" width="2" height="3"/><rect x="39.500" y="6" width="1.300" height="10"/><rect x="42" y="7.500" width="1.300" height="7"/><rect x="42" y="7.500" width="4.500" height="1.200"/><rect x="45.500" y="7.500" width="1.200" height="6"/><rect x="48.500" y="8" width="1.500" height="2.500"/><rect x="49.500" y="11.500" width="1.500" height="4"/></g><g fill="#f3f3f3"><rect x="80.500" y="7" width="1.500" height="5"/><rect x="80.500" y="7" width="6" height="1.200"/><rect x="85" y="7" width="1.500" height="9"/><rect x="82" y="14" width="2" height="1.200"/></g></svg></div>
<div class="pic" style="top:990px;background:#1b3e6e"><svg style="left:0;top:0" width="92" height="20" viewBox="0 0 92 20"><g fill="#fff" fill-opacity=".35"><rect x="3" y="3" width="1" height="1"/><rect x="17" y="5" width="1" height="1"/><rect x="34" y="2" width="1" height="1"/><rect x="51" y="4" width="1" height="1"/><rect x="69" y="3" width="1" height="1"/><rect x="86" y="6" width="1" height="1"/><rect x="88" y="14" width="1" height="1"/><rect x="3" y="13" width="1" height="1"/></g><path d="M9.5 2 h3.500 v3 h-3.500z M10.0 5 h3 v6.500 h-3z" fill="#f2f2f2"/><path d="M12.0 6.500 l3.200 5 h-4.200 z" fill="#0d0f14"/><path d="M6.5 12.800 l3 -1.800 h6 l2.500 1.800z" fill="#f3ead9"/><rect x="6.0" y="14.300" width="12" height=".9" fill="#e0a872"/><rect x="6.0" y="16" width="12" height="1.300" fill="#f7f7f7"/><path d="M23.5 2 h3.500 v3 h-3.500z M24.0 5 h3 v6.500 h-3z" fill="#f2f2f2"/><path d="M26.0 6.500 l3.200 5 h-4.200 z" fill="#0d0f14"/><path d="M20.5 12.800 l3 -1.800 h6 l2.500 1.800z" fill="#f3ead9"/><rect x="20.0" y="14.300" width="12" height=".9" fill="#e0a872"/><rect x="20.0" y="16" width="12" height="1.300" fill="#f7f7f7"/><path d="M56 2 h3.500 v3 h-3.500z M56.5 5 h3 v6.500 h-3z" fill="#f2f2f2"/><path d="M58.5 6.500 l3.200 5 h-4.200 z" fill="#0d0f14"/><path d="M53 12.800 l3 -1.800 h6 l2.500 1.800z" fill="#f3ead9"/><rect x="52.5" y="14.300" width="12" height=".9" fill="#e0a872"/><rect x="52.5" y="16" width="12" height="1.300" fill="#f7f7f7"/><path d="M70 2 h3.500 v3 h-3.500z M70.5 5 h3 v6.500 h-3z" fill="#f2f2f2"/><path d="M72.5 6.500 l3.200 5 h-4.200 z" fill="#0d0f14"/><path d="M67 12.800 l3 -1.800 h6 l2.500 1.800z" fill="#f3ead9"/><rect x="66.5" y="14.300" width="12" height=".9" fill="#e0a872"/><rect x="66.5" y="16" width="12" height="1.300" fill="#f7f7f7"/><g fill="#f3f3f3"><rect x="33" y="6.500" width="1.500" height="9"/><rect x="35.500" y="8" width="2.500" height="5"/><rect x="38" y="12" width="2.500" height="4"/><rect x="42.500" y="9" width="1.500" height="6"/><rect x="45" y="7" width="1.300" height="8"/><rect x="45" y="7" width="4" height="1.200"/><rect x="48" y="7" width="1.300" height="8"/><rect x="50.500" y="8" width="1" height="7"/></g><g fill="#f3f3f3"><path d="M79.500 6 l2 8 h1.500 l-1.500 -8z M86.500 6 l-2 10 h-1.500 l2 -10z"/><rect x="82" y="9" width="2" height="4"/></g></svg></div>
<div class="pic" style="top:1019px;background:#1b3e6e"><svg style="left:0;top:0" width="92" height="20" viewBox="0 0 92 20"><g fill="#fff" fill-opacity=".35"><rect x="3" y="3" width="1" height="1"/><rect x="17" y="5" width="1" height="1"/><rect x="34" y="2" width="1" height="1"/><rect x="51" y="4" width="1" height="1"/><rect x="69" y="3" width="1" height="1"/><rect x="86" y="6" width="1" height="1"/><rect x="88" y="14" width="1" height="1"/><rect x="3" y="13" width="1" height="1"/></g><rect x="10" y="1.500" width="1.500" height="9" fill="#8fc15a"/><rect x="8.500" y="3" width="1" height="2" fill="#f2f2f2"/><rect x="22" y="5" width="1.500" height="5" fill="#d7a85a"/><path d="M35 10 l2 -7 l1 7 M39 10 l1.500 -6" stroke="#7fae44" stroke-width="1.300" fill="none"/><path d="M49 10 l3 -4 l3 4z" fill="#3f9b4a"/><rect x="57" y="2" width="1" height="3" fill="#d43b3b"/><rect x="66" y="4.500" width="9" height="2.700" fill="#ececec"/><rect x="66" y="7.200" width="9" height="3" fill="#d43b3b"/></svg></div>
</div>
</body></html>
